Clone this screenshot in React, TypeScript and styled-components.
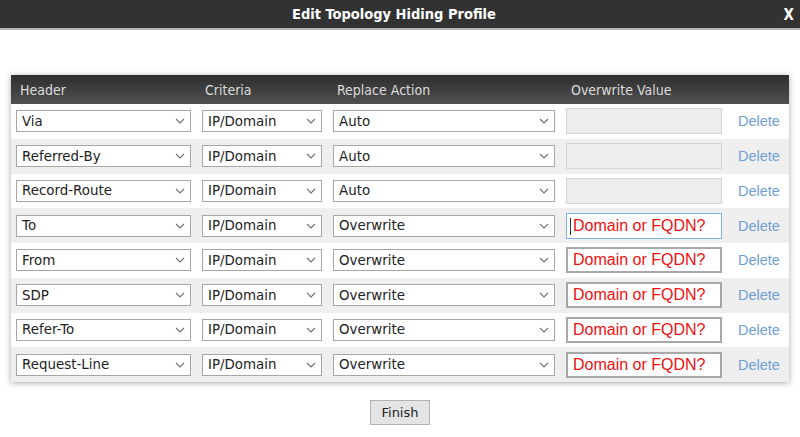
import React from 'react';
import styled, { createGlobalStyle } from 'styled-components';

const GlobalStyle = createGlobalStyle`
    body {
        margin: 0;
        background: #fff;
        font-family: "Liberation Sans", Arial, sans-serif;
    }
`;

// title bar
const TitleBar = styled.div`
    height: 28px;
    background: #323232;
    border-bottom: 2px solid #b4b4b4;
    display: flex;
    align-items: center;
    justify-content: center;
    position: relative;
    color: #fff;
`;

const Title = styled.h1`
    margin: 0 12px 0 0;
    font-family: "DejaVu Sans Condensed", "Liberation Sans", sans-serif;
    font-size: 14.5px;
    font-weight: bold;
`;

const Close = styled.span`
    position: absolute;
    right: 6px;
    top: 6px;
    font-family: "DejaVu Sans Condensed", "Liberation Sans", sans-serif;
    font-size: 15px;
    font-weight: bold;
`;

const Body = styled.div`
    padding: 45px 11px 0;
`;

// table
const Table = styled.div`
    box-shadow: 0 1px 6px rgba(0, 0, 0, 0.35);
`;

const cols = '186px 131px 233px 167px 1fr';

const HeadRow = styled.div`
    display: grid;
    grid-template-columns: ${cols};
    height: 29px;
    align-items: center;
    background: linear-gradient(#2e2e2e, #505050);
    color: #dcdcdc;
    font-family: "DejaVu Sans Condensed", "Liberation Sans", sans-serif;
    font-size: 14px;
`;

const HeadCell = styled.div<{ $pad?: number }>`
    padding-left: ${(p) => p.$pad ?? 9}px;
`;

const Row = styled.div<{ $odd: boolean }>`
    display: grid;
    grid-template-columns: ${cols};
    height: 34.75px;
    align-items: center;
    background: ${(p) => (p.$odd ? '#efefef' : '#fff')};
`;

const Cell = styled.div`
    padding: 0 6px 0 5px;
`;

const SelectWrap = styled.div`
    position: relative;
    height: 22px;
    border: 1px solid #a6a6a6;
    background: #fff;
    box-sizing: border-box;
    display: flex;
    align-items: center;
    padding-left: 5px;
    font-family: "DejaVu Sans", Tahoma, sans-serif;
    font-size: 13.4px;
    color: #222;
`;

const Chevron = styled.svg`
    position: absolute;
    right: 5px;
    top: 7px;
`;

const ValueInput = styled.div<{ $disabled?: boolean; $focused?: boolean }>`
    position: relative;
    height: 26px;
    box-sizing: border-box;
    border: ${(p) =>
        p.$disabled ? '1px solid #d4d4d4' : p.$focused ? '1px solid #7eb1e3' : '2px solid #a8a8a8'};
    background: ${(p) => (p.$disabled ? '#ededed' : '#fff')};
    color: #f01010;
    font-size: 16px;
    display: flex;
    align-items: center;
    padding-left: ${(p) => (p.$focused ? 6 : 5)}px;
    white-space: nowrap;
`;

const Caret = styled.span`
    position: absolute;
    left: 3px;
    top: 4px;
    width: 1px;
    height: 17px;
    background: #333;
`;

const DeleteLink = styled.a`
    color: #6f9fd6;
    font-size: 14.5px;
    padding-left: 5px;
    text-decoration: none;
    cursor: pointer;
`;

const Footer = styled.div`
    display: flex;
    justify-content: center;
    padding-top: 18px;
`;

const FinishButton = styled.button`
    width: 60px;
    height: 25px;
    background: #e4e4e4;
    border: 1px solid #b0b0b0;
    font-family: "DejaVu Sans", Tahoma, sans-serif;
    font-size: 13px;
    color: #222;
    padding: 0;
`;

type Rule = { header: string; action: string };

const rules: Rule[] = [
    { header: 'Via', action: 'Auto' },
    { header: 'Referred-By', action: 'Auto' },
    { header: 'Record-Route', action: 'Auto' },
    { header: 'To', action: 'Overwrite' },
    { header: 'From', action: 'Overwrite' },
    { header: 'SDP', action: 'Overwrite' },
    { header: 'Refer-To', action: 'Overwrite' },
    { header: 'Request-Line', action: 'Overwrite' },
];

const Select: React.FC<{ value: string }> = ({ value }) => (
    <SelectWrap>
        {value}
        <Chevron width="10" height="6" viewBox="0 0 10 6">
            <path d="M1 1 L5 5 L9 1" fill="none" stroke="#707070" strokeWidth="1.1" />
        </Chevron>
    </SelectWrap>
);

const App: React.FC = () => {
    return (
        <>
            <GlobalStyle />
            <TitleBar>
                <Title>Edit Topology Hiding Profile</Title>
                <Close>X</Close>
            </TitleBar>
            <Body>
                <Table>
                    <HeadRow>
                        <HeadCell>Header</HeadCell>
                        <HeadCell $pad={8}>Criteria</HeadCell>
                        <HeadCell>Replace Action</HeadCell>
                        <HeadCell $pad={10}>Overwrite Value</HeadCell>
                        <HeadCell />
                    </HeadRow>
                    {rules.map((r, i) => {
                        const auto = r.action === 'Auto';
                        return (
                            <Row key={r.header} $odd={i % 2 === 1}>
                                <Cell>
                                    <Select value={r.header} />
                                </Cell>
                                <Cell>
                                    <Select value="IP/Domain" />
                                </Cell>
                                <Cell>
                                    <Select value={r.action} />
                                </Cell>
                                <Cell>
                                    <ValueInput $disabled={auto} $focused={i === 3}>
                                        {i === 3 && <Caret />}
                                        {!auto && 'Domain or FQDN?'}
                                    </ValueInput>
                                </Cell>
                                <Cell>
                                    <DeleteLink>Delete</DeleteLink>
                                </Cell>
                            </Row>
                        );
                    })}
                </Table>
                <Footer>
                    <FinishButton>Finish</FinishButton>
                </Footer>
            </Body>
        </>
    );
};

export default App;
